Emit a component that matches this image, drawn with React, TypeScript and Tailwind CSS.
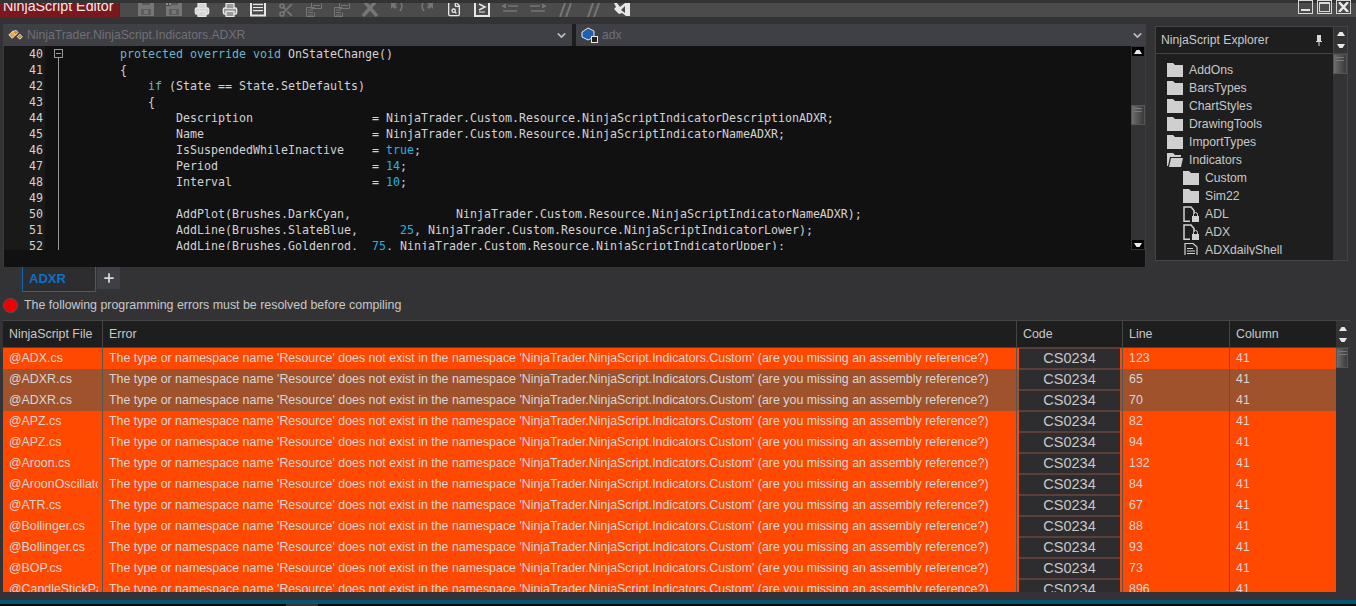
import type { ReactNode } from "react";
import { Printer, Scissors, FileSearch, Plus, ChevronDown } from "lucide-react";

const arial = "font-['Liberation_Sans',Arial,sans-serif]";

type Tok = { t: string; c?: "k" | "n" };

const code: { n: number; toks: Tok[] }[] = [
  { n: 40, toks: [{ t: "        " }, { t: "protected override void", c: "k" }, { t: " OnStateChange()" }] },
  { n: 41, toks: [{ t: "        {" }] },
  { n: 42, toks: [{ t: "            " }, { t: "if", c: "k" }, { t: " (State == State.SetDefaults)" }] },
  { n: 43, toks: [{ t: "            {" }] },
  { n: 44, toks: [{ t: "                Description                 = NinjaTrader.Custom.Resource.NinjaScriptIndicatorDescriptionADXR;" }] },
  { n: 45, toks: [{ t: "                Name                        = NinjaTrader.Custom.Resource.NinjaScriptIndicatorNameADXR;" }] },
  { n: 46, toks: [{ t: "                IsSuspendedWhileInactive    = " }, { t: "true", c: "n" }, { t: ";" }] },
  { n: 47, toks: [{ t: "                Period                      = " }, { t: "14", c: "n" }, { t: ";" }] },
  { n: 48, toks: [{ t: "                Interval                    = " }, { t: "10", c: "n" }, { t: ";" }] },
  { n: 49, toks: [{ t: " " }] },
  { n: 50, toks: [{ t: "                AddPlot(Brushes.DarkCyan,               NinjaTrader.Custom.Resource.NinjaScriptIndicatorNameADXR);" }] },
  { n: 51, toks: [{ t: "                AddLine(Brushes.SlateBlue,      " }, { t: "25", c: "n" }, { t: ", NinjaTrader.Custom.Resource.NinjaScriptIndicatorLower);" }] },
  { n: 52, toks: [{ t: "                AddLine(Brushes.Goldenrod,  " }, { t: "75", c: "n" }, { t: ", NinjaTrader.Custom.Resource.NinjaScriptIndicatorUpper);" }] },
];

const tree = [
  { name: "AddOns", kind: "folder", child: false },
  { name: "BarsTypes", kind: "folder", child: false },
  { name: "ChartStyles", kind: "folder", child: false },
  { name: "DrawingTools", kind: "folder", child: false },
  { name: "ImportTypes", kind: "folder", child: false },
  { name: "Indicators", kind: "open", child: false },
  { name: "Custom", kind: "folder", child: true },
  { name: "Sim22", kind: "folder", child: true },
  { name: "ADL", kind: "locked", child: true },
  { name: "ADX", kind: "locked", child: true },
  { name: "ADXdailyShell", kind: "file", child: true },
];

const rows = [
  { file: "@ADX.cs", line: 123 },
  { file: "@ADXR.cs", line: 65, sel: true },
  { file: "@ADXR.cs", line: 70, sel: true },
  { file: "@APZ.cs", line: 82 },
  { file: "@APZ.cs", line: 94 },
  { file: "@Aroon.cs", line: 132 },
  { file: "@AroonOscillator.cs", line: 84 },
  { file: "@ATR.cs", line: 67 },
  { file: "@Bollinger.cs", line: 88 },
  { file: "@Bollinger.cs", line: 93 },
  { file: "@BOP.cs", line: 73 },
  { file: "@CandleStickPattern.cs", line: 896 },
];

const errorText =
  "The type or namespace name 'Resource' does not exist in the namespace 'NinjaTrader.NinjaScript.Indicators.Custom' (are you missing an assembly reference?)";

const dim = "#767676";
const lit = "#e6e6e6";

function TreeIcon({ kind }: { kind: string }) {
  if (kind === "folder")
    return (
      <svg width="16" height="14" viewBox="0 0 16 14">
        <path d="M0 0h6l2 2h8v12H0z" fill="#cfcfcf" />
      </svg>
    );
  if (kind === "open")
    return (
      <svg width="16" height="14" viewBox="0 0 16 14">
        <path d="M0 0h6l2 2h6v2H3L1 13H0z" fill="#cfcfcf" />
        <path d="M4 5h12l-2 9H2z" fill="#cfcfcf" />
      </svg>
    );
  if (kind === "locked")
    return (
      <svg width="16" height="16" viewBox="0 0 16 16" fill="none">
        <path d="M1 16V1h7l3 3.500v3M1 15.200H7" stroke="#d2d2d2" strokeWidth="1.500" />
        <rect x="9" y="10" width="7" height="6" fill="#d2d2d2" />
        <path d="M10.500 10V8.500a2 2 0 0 1 4 0V10" stroke="#d2d2d2" />
      </svg>
    );
  return (
    <svg width="16" height="14" viewBox="0 0 16 14" fill="none" stroke="#d2d2d2">
      <path d="M2 13.500V.5h8l4 3.500v9.500zM.5 13.500h15" strokeWidth="1.200" />
      <path d="M4 5.500h6M4 8h8M4 10.500h8" />
    </svg>
  );
}

function Thumb({ className }: { className: string }) {
  return (
    <div className={`${className} bg-gradient-to-r from-[#6e6e6e] to-[#3a3a3a] border border-[#555] flex flex-col gap-[2px] pt-[2px] pl-[2px]`}>
      <div className="h-px w-[8px] bg-[#777]" />
      <div className="h-px w-[8px] bg-[#777]" />
    </div>
  );
}

function ArrowBtn({ up }: { up?: boolean }) {
  return (
    <svg width="8" height="4" viewBox="0 0 8 4">
      <path d={up ? "M0 4 L2.500 0 H5.500 L8 4z" : "M0 0 L2.500 4 H5.500 L8 0z"} fill="#e8e8e8" />
    </svg>
  );
}

function Box({ children }: { children: ReactNode }) {
  return <div className="w-[28px] h-[14px] flex justify-center items-start shrink-0 overflow-hidden">{children}</div>;
}

function FloppyIcon({ extra }: { extra?: boolean }) {
  return (
    <svg width="16" height="14" viewBox="0 0 16 14">
      <path d="M0 0h16v13H0z" fill={dim} />
      <path d="M4 0h8v2H4z" fill="#5a5a5a" />
      <path d="M3 6h10v6H3z" fill="#5e5e5e" />
      <path d="M6 7h4v4H6z" fill={dim} />
      {extra && <path d="M0 0h5v3H0z" fill="#4b4b4b" />}
      {extra && <path d="M0 0h2v2H0zM3 0h2v2H3z" fill="#8a8a8a" />}
    </svg>
  );
}

function PagesIcon() {
  return (
    <svg width="16" height="14" viewBox="0 0 16 14" fill="none" stroke={dim}>
      <path d="M5.500 0v5.500h10V0" />
      <path d="M7 2.500h7" />
      <path d="M.5 4.500h8M.5 4.500v9h8v-4" />
      <path d="M2 7h5M2 9.500h5M2 12h5" />
    </svg>
  );
}

function Toolbar() {
  return (
    <div className="flex-1 h-[14px] bg-[#4b4b4b] overflow-hidden flex pl-[12px]">
      <Box><FloppyIcon /></Box>
      <Box><FloppyIcon extra /></Box>
      <Box><Printer size={16} color={lit} fill="#d5d5d5" className="-mt-[1px]" /></Box>
      <Box><Printer size={16} color={lit} fill="#999" className="-mt-[1px]" /></Box>
      <Box>
        <svg width="16" height="14" viewBox="0 0 16 14" fill="none" stroke={lit}>
          <path d="M1 0v12.500h14V0" strokeWidth="2" />
          <path d="M3 1.500h10M3 4.500h10M3 7.500h10" strokeWidth="1.500" />
          <path d="M3 3h10M3 6h10" stroke="#333" />
        </svg>
      </Box>
      <Box><Scissors size={16} color={dim} strokeWidth={2.500} className="-mt-[1px]" /></Box>
      <Box><PagesIcon /></Box>
      <Box><PagesIcon /></Box>
      <Box>
        <svg width="16" height="14" viewBox="0 0 16 14" fill="none" stroke={dim} strokeWidth="3.500">
          <path d="M1 -3L15 13M15 -3L1 13" />
        </svg>
      </Box>
      <Box>
        <svg width="16" height="14" viewBox="0 0 16 14" fill={dim}>
          <path d="M1 0h6L5 2l2 2-2 2-2-2-2 2z" />
          <path d="M10 -1q4 4 0 9" fill="none" stroke={dim} strokeWidth="1.500" />
        </svg>
      </Box>
      <Box>
        <svg width="16" height="14" viewBox="0 0 16 14" fill={dim}>
          <path d="M15 0H9l2 2-2 2 2 2 2-2 2 2z" />
          <path d="M6 -1q-4 4 0 9" fill="none" stroke={dim} strokeWidth="1.500" />
        </svg>
      </Box>
      <Box><FileSearch size={16} color={lit} className="-mt-[2px]" /></Box>
      <Box>
        <svg width="16" height="14" viewBox="0 0 16 14" fill="none">
          <path d="M1-1v14h14V-1" stroke={lit} strokeWidth="2" />
          <path d="M5 1 l6 3 -6 3" stroke={lit} strokeWidth="1.500" />
          <path d="M5 9h6" stroke={lit} />
        </svg>
      </Box>
      <Box>
        <svg width="16" height="12" viewBox="0 0 16 12" fill="none" stroke={dim} strokeWidth="1.500">
          <path d="M0 3h4M4 1L1 3l3 2M6 3h10M1 8h14" />
        </svg>
      </Box>
      <Box>
        <svg width="16" height="12" viewBox="0 0 16 12" fill="none" stroke={dim} strokeWidth="1.500">
          <path d="M0 3h10M12 3h4M12 1l3 2-3 2M1 8h14" />
        </svg>
      </Box>
      <Box>
        <svg width="14" height="14" viewBox="0 0 14 14" fill="none" stroke={dim} strokeWidth="2">
          <path d="M6 0L1 14M12 0L7 14" />
        </svg>
      </Box>
      <Box>
        <svg width="14" height="14" viewBox="0 0 14 14" fill="none" stroke={dim} strokeWidth="2">
          <path d="M6 0L1 14M12 0L7 14" />
        </svg>
      </Box>
      <Box>
        <svg width="16" height="14" viewBox="0 0 16 14">
          <path d="M0 0h3l3 4 5-4h5v13h-4l-4-3-3 1-5-5 2-2z" fill="#e8e8e8" />
          <path d="M11 3v7l-4-3z" fill="#4b4b4b" />
        </svg>
      </Box>
    </div>
  );
}

function WindowButtons() {
  const btn = "w-[15px] h-[14px] border border-[#d8d8d8] flex justify-center";
  return (
    <div className="w-[58px] h-[17px] -mt-[3px] bg-transparent flex gap-[4px] shrink-0">
      <div className={`${btn} items-end pb-[2px]`}>
        <div className="w-[9px] h-[2px] bg-[#e0e0e0]" />
      </div>
      <div className={`${btn} items-center`}>
        <div className="w-[11px] h-[10px] border border-t-2 border-[#d8d8d8]" />
      </div>
      <div className={`${btn} items-center`}>
        <svg width="11" height="10" viewBox="0 0 11 10" fill="none" stroke="#e8e8e8" strokeWidth="2.500">
          <path d="M1 0l9 10M10 0L1 10" />
        </svg>
      </div>
    </div>
  );
}

export default function App() {
  return (
    <div className={`${arial} w-[1356px] h-[606px] bg-[#333336] flex flex-col overflow-hidden text-[12.4px] text-[#c8c8c8]`}>
      {/* title + toolbar */}
      <div className="h-[3px] bg-[#333336] shrink-0" />
      <div className="h-[14px] flex shrink-0 bg-[#4b4b4b]">
        <div className="w-[120px] h-[14px] bg-[#7a1820] overflow-hidden border-r border-[#5a2025] shrink-0">
          <div className="text-[14.3px] leading-[14px] -mt-[4px] pl-[3px] text-[#f0e8e8] whitespace-nowrap">NinjaScript Editor</div>
        </div>
        <Toolbar />
        <WindowButtons />
      </div>
      {/* top area */}
      <div className="h-[250px] flex shrink-0 pt-[7px] pl-[3px]">
        <div className="w-[1143px] flex flex-col shrink-0">
          <div className="h-[22px] flex shrink-0 text-[12.2px]">
            <div className="w-[569px] bg-[#3f3f46] flex items-center pl-[5px] pr-[4px]">
              <svg width="16" height="16" viewBox="0 0 19 16" className="shrink-0">
                <path d="M1 8l5-5 4 4-5 5z" fill="#e9a53b" stroke="#f3efe6" />
                <path d="M9 2l3 3-3 3-3-3zM14 7l3 3-3 3-3-3z" fill="#cf8a25" stroke="#f3efe6" />
              </svg>
              <span className="ml-[3px] text-[#707075] flex-1 whitespace-nowrap">NinjaTrader.NinjaScript.Indicators.ADXR</span>
              <ChevronDown size={13} strokeWidth={3} color="#bdbdbd" />
            </div>
            <div className="w-[4px] bg-[#1e1e1e]" />
            <div className="flex-1 bg-[#3f3f46] flex items-center pl-[5px] pr-[2px]">
              <svg width="18" height="16" viewBox="0 0 18 16" className="shrink-0">
                <path d="M1 5l6-4 6 3v6l-6 3-6-3z" fill="#1e5fb4" stroke="#e8e8e8" />
                <rect x="10.500" y="9.500" width="6" height="6" fill="#222" stroke="#e8e8e8" />
              </svg>
              <span className="ml-[3px] text-[#707075] flex-1">adx</span>
              <ChevronDown size={13} strokeWidth={3} color="#bdbdbd" />
            </div>
          </div>
          <div className="flex-1 min-h-0 flex flex-col bg-[#111112] border-l border-r border-[#3a3a3a]">
            <div className="h-[204px] flex shrink-0">
              <div className="flex-1 min-w-0 flex overflow-hidden font-['DejaVu_Sans_Mono',monospace] text-[11.63px] leading-[16px] text-[#d2d2d2]">
                <div className="w-[41px] bg-[#191919] text-right pr-[2px] shrink-0 flex flex-col">
                  {code.map((l) => (
                    <div key={l.n} className="h-[16px] shrink-0">{l.n}</div>
                  ))}
                </div>
                <div className="w-[19px] shrink-0 flex flex-col items-start pl-[9px] pt-[3px]">
                  <div className="w-[9px] h-[9px] border border-[#999] flex items-center justify-center">
                    <div className="w-[5px] h-px bg-[#999]" />
                  </div>
                  <div className="w-px flex-1 bg-[#999] ml-[4px]" />
                </div>
                <div className="flex-1 flex flex-col">
                  {code.map((l) => (
                    <div key={l.n} className="h-[16px] shrink-0 whitespace-pre">
                      {l.toks.map((t, i) => (
                        <span key={i} className={t.c === "k" ? "text-[#6bb4cc]" : t.c === "n" ? "text-[#25b2e0]" : ""}>
                          {t.t}
                        </span>
                      ))}
                    </div>
                  ))}
                </div>
              </div>
              <div className="w-[14px] bg-[#333336] shrink-0 flex flex-col items-center">
                <div className="w-[12px] h-[9px] bg-black mt-px flex items-center justify-center"><ArrowBtn up /></div>
                <Thumb className="w-[14px] h-[20px] mt-[49px]" />
                <div className="w-[12px] h-[9px] bg-black mt-[115px] flex items-center justify-center"><ArrowBtn /></div>
              </div>
            </div>
          </div>
        </div>
        {/* explorer */}
        <div className="ml-[9px] mt-[2px] w-[193px] h-[235px] border border-[#444] bg-[#1e1e1e] flex flex-col shrink-0 text-[12.2px]">
          <div className="h-[27px] flex border-b border-[#444] shrink-0">
            <div className="flex-1 flex items-center pl-[5px] pr-[11px] text-[#c8c8c8]">
              <span className="flex-1 whitespace-nowrap">NinjaScript Explorer</span>
              <svg width="6" height="11" viewBox="0 0 6 11">
                <path d="M1 0h4v6h1v1H3.500v4h-1V7H0V6h1z" fill="#d8d8d8" />
              </svg>
            </div>
            <div className="w-[14px] border-l border-[#444] flex flex-col items-center justify-center gap-[8px] bg-[#333336]">
              <ArrowBtn up />
              <ArrowBtn />
            </div>
          </div>
          <div className="flex-1 min-h-0 flex">
            <div className="flex-1 min-w-0">
              <div className="h-[201px] overflow-hidden flex flex-col pt-[7px] pl-[11px]">
                {tree.map((n) => (
                  <div key={n.name} className={`h-[18px] flex items-center shrink-0 ${n.child ? "pl-[16px]" : ""}`}>
                    <div className="w-[22px] shrink-0"><TreeIcon kind={n.kind} /></div>
                    <span className="whitespace-nowrap text-[#c8c8c8]">{n.name}</span>
                  </div>
                ))}
              </div>
            </div>
            <div className="w-[14px] bg-[#333336] shrink-0">
              <Thumb className="w-[14px] h-[20px]" />
            </div>
          </div>
        </div>
      </div>
      {/* tabs */}
      <div className="h-[25px] flex items-start pl-[22px] shrink-0">
        <div className="w-[74px] h-[25px] border border-t-0 border-[#0b6ab0] bg-[#2d2d30] pl-[6px] flex items-center font-bold text-[13px] text-[#0f6fc0]">ADXR</div>
        <div className="w-[23px] h-[22px] ml-px bg-[#3f3f46] flex items-center justify-center">
          <Plus size={14} strokeWidth={3} color="#d8d8d8" />
        </div>
      </div>
      {/* error note */}
      <div className="h-[26px] mb-[2px] flex items-center pl-[3px] shrink-0">
        <div className="w-[15px] h-[15px] rounded-full bg-[#f00000] border border-[#555]" />
        <span className="ml-[6px]">The following programming errors must be resolved before compiling</span>
      </div>
      {/* table */}
      <div className="ml-[3px] w-[1347px] h-[272px] shrink-0 flex flex-col overflow-hidden border-t border-[#444]">
        <div className="h-[27px] flex bg-[#1e1e1e] shrink-0 border-b border-[#444]">
          <div className="w-[100px] pl-[6px] flex items-center border-r border-[#444]">NinjaScript File</div>
          <div className="w-[914px] pl-[6px] flex items-center border-r border-[#444]">Error</div>
          <div className="w-[106px] pl-[6px] flex items-center border-r border-[#444]">Code</div>
          <div className="w-[107px] pl-[6px] flex items-center border-r border-[#444]">Line</div>
          <div className="w-[106px] pl-[6px] flex items-center">Column</div>
          <div className="w-[14px] bg-[#333336] flex flex-col items-center justify-center gap-[7px]">
            <ArrowBtn up />
            <ArrowBtn />
          </div>
        </div>
        <div className="flex-1 min-h-0 flex">
          <div className="w-[1333px] flex flex-col shrink-0">
            {rows.map((r, i) => (
              <div key={i} className={`h-[21px] shrink-0 flex items-center text-[#d6d6d6] ${r.sel ? "bg-[#a0522d]" : "bg-[#ff4800]"}`}>
                <div className="w-[100px] h-full pl-[6px] flex items-center border-r border-[#555] overflow-hidden whitespace-nowrap">
                  <span className="w-[89px] overflow-hidden block">{r.file}</span>
                </div>
                <div className="w-[914px] h-full pl-[6px] flex items-center border-r border-[#555] whitespace-nowrap overflow-hidden">{errorText}</div>
                <div className="w-[106px] h-full px-[2px] border-r border-[#555]">
                  <div className="h-[21px] border-y border-[#5a4038] bg-[#2d2d30] text-[14.5px] leading-[19px] text-center text-[#c8c8c8]">CS0234</div>
                </div>
                <div className="w-[107px] h-full pl-[6px] flex items-center border-r border-[#555]">{r.line}</div>
                <div className="w-[106px] h-full pl-[6px] flex items-center">41</div>
              </div>
            ))}
          </div>
          <div className="w-[14px] bg-[#333336] shrink-0">
            <Thumb className="w-[12px] h-[20px]" />
          </div>
        </div>
      </div>
      {/* bottom strip */}
      <div className="h-[8px] bg-[#333336] shrink-0" />
      <div className="h-[4px] bg-[#07556f] shrink-0" />
      <div className="flex-1 bg-[#04090c] flex pl-[286px]">
        <div className="w-[32px] bg-[#333336]" />
      </div>
    </div>
  );
}
